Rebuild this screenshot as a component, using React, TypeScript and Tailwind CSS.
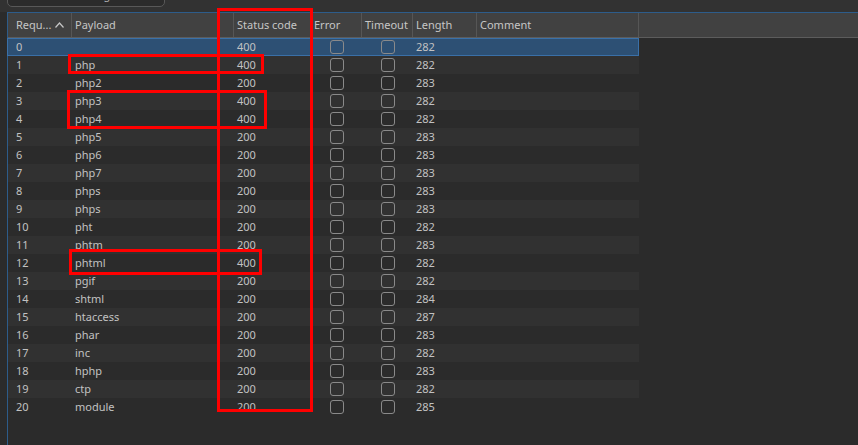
import React from "react";

const rows: [string, string, string, string][] = [
  ["0", "", "400", "282"],
  ["1", "php", "400", "282"],
  ["2", "php2", "200", "283"],
  ["3", "php3", "400", "282"],
  ["4", "php4", "400", "282"],
  ["5", "php5", "200", "283"],
  ["6", "php6", "200", "283"],
  ["7", "php7", "200", "283"],
  ["8", "phps", "200", "283"],
  ["9", "phps", "200", "283"],
  ["10", "pht", "200", "282"],
  ["11", "phtm", "200", "283"],
  ["12", "phtml", "400", "282"],
  ["13", "pgif", "200", "282"],
  ["14", "shtml", "200", "284"],
  ["15", "htaccess", "200", "287"],
  ["16", "phar", "200", "283"],
  ["17", "inc", "200", "282"],
  ["18", "hphp", "200", "283"],
  ["19", "ctp", "200", "282"],
  ["20", "module", "200", "285"],
];

const Check = () => (
  <div className="w-[14px] h-[14px] rounded-[3px] border border-[#8a8a8a]" />
);

const App = () => {
  return (
    <div
      className="relative w-[858px] h-[445px] overflow-hidden bg-[#2b2b2b] text-[11px] text-[#c2c2c2] flex flex-col"
      style={{ fontFamily: '"Noto Sans", "Open Sans", sans-serif' }}
    >
      {/* filter bar, mostly scrolled out of view */}
      <div className="h-[12px] shrink-0 bg-[#323232] pl-[7px] overflow-hidden">
        <div className="w-[158px] h-[24px] -mt-[17px] rounded-b-[5px] border border-[#585858] bg-[#2b2b2b] flex items-center gap-[6px] pl-[10px]">
          <svg width="10" height="10" viewBox="0 0 10 10" fill="none" stroke="#9a9a9a" strokeWidth="1.3">
            <circle cx="4" cy="4" r="3" />
            <path d="M6.2 6.2 9 9" />
          </svg>
          <span className="text-[#a8a8a8]">Filter: Showing all items</span>
        </div>
      </div>

      <div className="flex-1 ml-[7px] border-l border-t border-[#2d5c8a] flex flex-col">
        {/* header */}
        <div className="h-[25px] shrink-0 bg-[#414141] border-b border-[#5c5c5c] flex items-stretch text-[#c6c6c6]">
          <div className="w-[64px] border-r border-[#565656] pl-[8px] flex items-center gap-[4px]">
            <span>Requ...</span>
            <svg width="9" height="6" viewBox="0 0 9 6" fill="none" stroke="#c6c6c6" strokeWidth="1.2">
              <path d="M0.5 5.5 4.5 1 8.5 5.5" />
            </svg>
          </div>
          <div className="w-[162px] border-r border-[#565656] pl-[3px] flex items-center">Payload</div>
          <div className="w-[77px] border-r border-[#565656] pl-[3px] flex items-center">Status code</div>
          <div className="w-[51px] border-r border-[#565656] pl-[3px] flex items-center">Error</div>
          <div className="w-[51px] border-r border-[#565656] pl-[3px] flex items-center">Timeout</div>
          <div className="w-[64px] border-r border-[#565656] pl-[3px] flex items-center">Length</div>
          <div className="w-[162px] border-r border-[#565656] pl-[3px] flex items-center">Comment</div>
          <div className="flex-1" />
        </div>

        {/* rows */}
        <div className="flex flex-col w-[631px]">
          {rows.map(([n, payload, status, len], i) => (
            <div
              key={n}
              className={
                i === 0
                  ? "h-[18px] flex items-center bg-[#2d5074] border border-[#3a70a8] -ml-px"
                  : i % 2 === 1
                  ? "h-[18px] flex items-center bg-[#313131]"
                  : "h-[18px] flex items-center bg-[#2b2b2b]"
              }
            >
              <div className="w-[64px] pl-[8px]">{n}</div>
              <div className="w-[162px] pl-[3px]">{payload}</div>
              <div className="w-[77px] pl-[3px]">{status}</div>
              <div className="w-[51px] flex justify-center">
                <Check />
              </div>
              <div className="w-[51px] flex justify-center">
                <Check />
              </div>
              <div className="w-[64px] pl-[3px]">{len}</div>
              <div className="flex-1" />
            </div>
          ))}
        </div>
      </div>

      {/* red annotations */}
      <div className="absolute left-[217px] top-[8px] w-[96px] h-[404px] border-[3px] border-[#ff0000]" />
      <div className="absolute left-[68px] top-[54px] w-[196px] h-[20px] border-[3px] border-[#ff0000]" />
      <div className="absolute left-[67px] top-[90px] w-[200px] h-[39px] border-[3px] border-[#ff0000]" />
      <div className="absolute left-[69px] top-[249px] w-[193px] h-[26px] border-[3px] border-[#ff0000]" />
    </div>
  );
};

export default App;
